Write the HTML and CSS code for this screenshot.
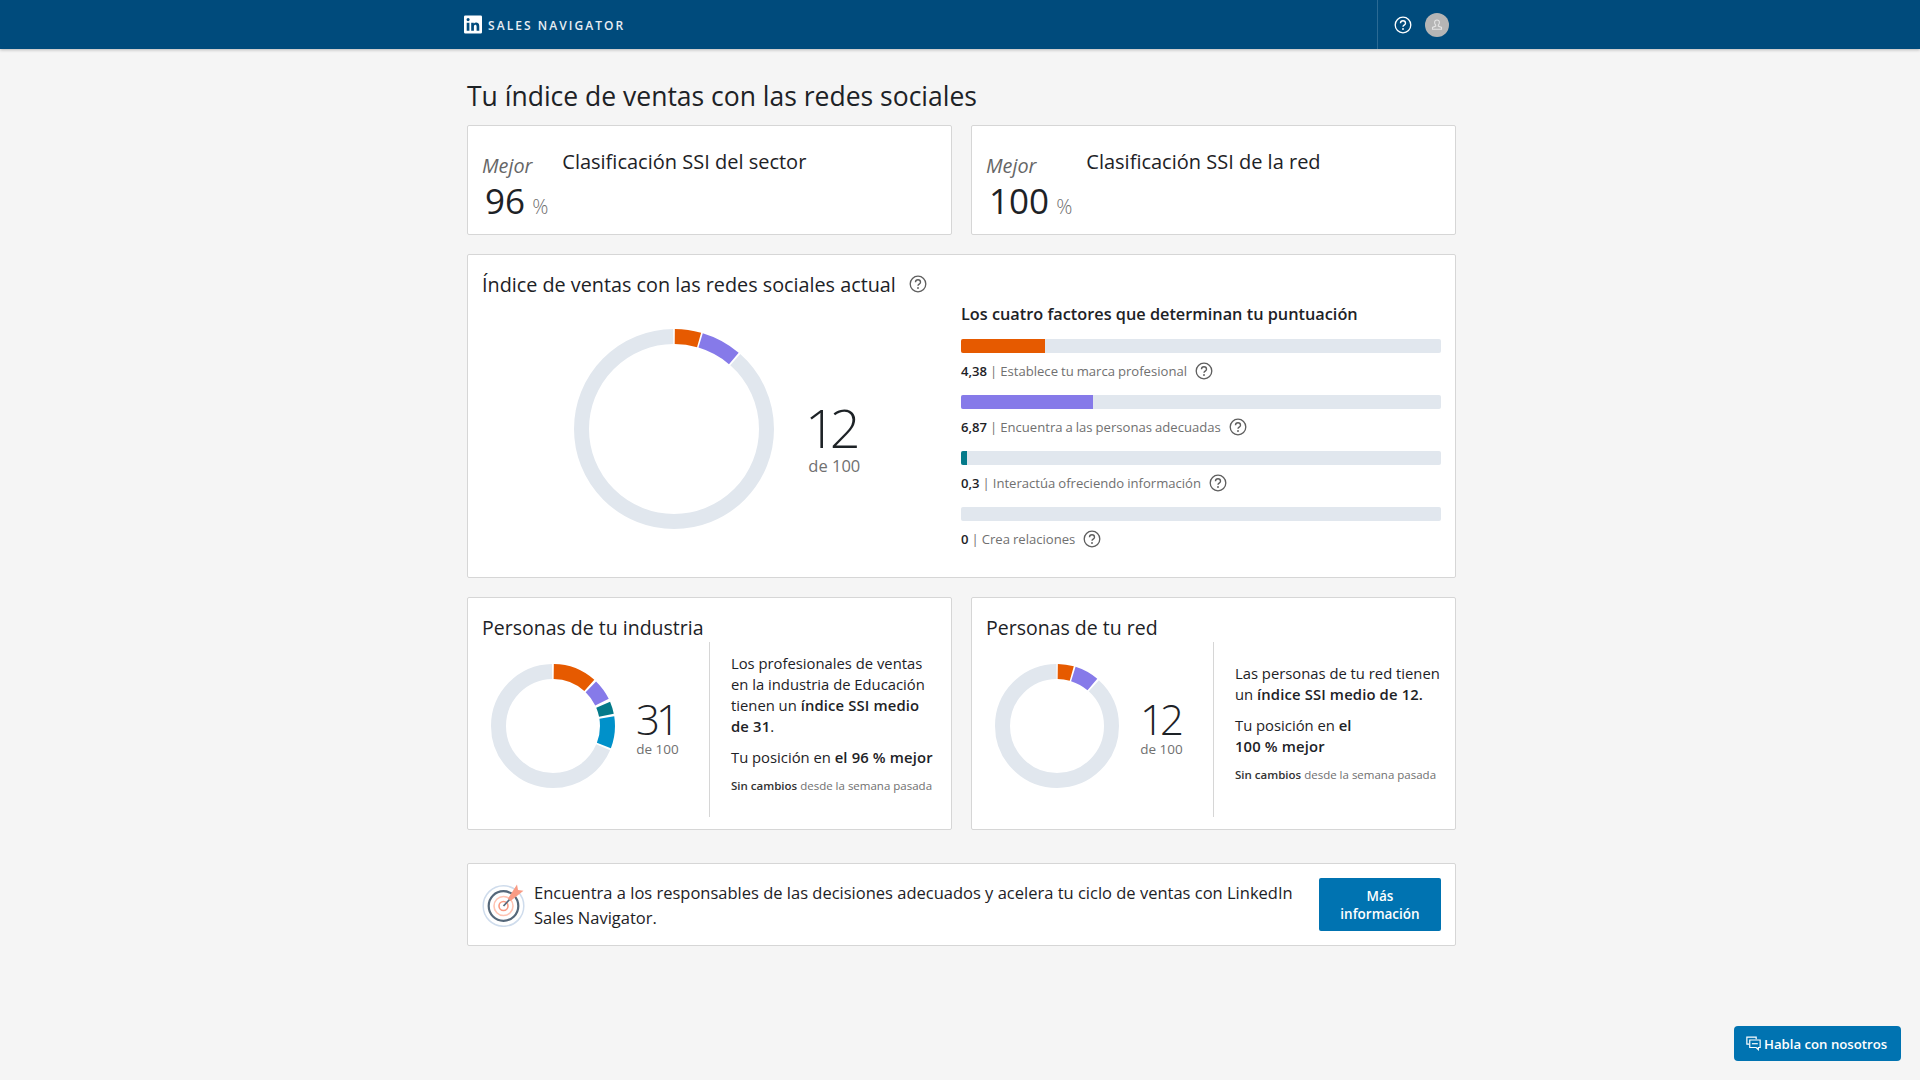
FILE: index.html
```html
<!DOCTYPE html>
<html lang="es">

<head>
    <meta charset="UTF-8">
    <title>Tu índice de ventas con las redes sociales</title>
    <link rel="stylesheet" href="styles.css">
</head>

<body>
    <svg class="defs">
        <symbol id="help" viewBox="0 0 18 18">
            <circle cx="9" cy="9" r="7.8" fill="none" stroke="currentColor" stroke-width="1.3"></circle>
            <path d="M6.5 7.2a2.5 2.5 0 0 1 5 0c0 1.9-2.5 1.9-2.5 3.6" fill="none" stroke="currentColor" stroke-width="1.4"></path>
            <circle cx="9" cy="13" r="0.95" fill="currentColor"></circle>
        </symbol>
    </svg>

    <header class="topbar">
        <div class="brand">
            <svg class="brand-logo" viewBox="2 2 20 20">
                <path fill="#fff" d="M20.5 2h-17A1.5 1.5 0 002 3.5v17A1.5 1.5 0 003.5 22h17a1.5 1.5 0 001.5-1.5v-17A1.5 1.5 0 0020.5 2zM8 19H5v-9h3zM6.5 8.25A1.75 1.75 0 118.3 6.5a1.78 1.78 0 01-1.8 1.75zM19 19h-3v-4.74c0-1.42-.6-1.93-1.38-1.93A1.74 1.74 0 0013 14.19a.66.66 0 000 .14V19h-3v-9h2.9v1.3a3.11 3.11 0 012.7-1.4c1.55 0 3.36.86 3.36 3.66z"></path>
            </svg>
            <span class="brand-name">SALES NAVIGATOR</span>
        </div>
        <div class="topbar-tools">
            <svg class="topbar-help"><use href="#help"></use></svg>
            <div class="avatar">
                <svg viewBox="0 0 24 24" width="24" height="24">
                    <path d="M12 7a2.4 2.4 0 0 1 2.4 2.5c0 1.2-.6 2.100-1.100 2.600v1l3.200 1.300v1.800h-9v-1.800l3.200-1.300v-1c-.5-.5-1.100-1.400-1.100-2.600A2.400 2.400 0 0 1 12 7z" fill="none" stroke="#e4e4e4" stroke-width="1.100"></path>
                </svg>
            </div>
        </div>
    </header>

    <main class="page">
        <h1 class="page-title">Tu índice de ventas con las redes sociales</h1>

        <div class="two-col">
            <section class="card rank-card">
                <div class="rank-score">
                    <div class="rank-label">Mejor</div>
                    <div class="rank-value">96 <span class="rank-pct">%</span></div>
                </div>
                <div class="rank-title">Clasificación SSI del sector</div>
            </section>
            <section class="card rank-card">
                <div class="rank-score">
                    <div class="rank-label">Mejor</div>
                    <div class="rank-value">100 <span class="rank-pct">%</span></div>
                </div>
                <div class="rank-title">Clasificación SSI de la red</div>
            </section>
        </div>

        <section class="card main-card">
            <div class="main-left">
                <h2 class="card-title">Índice de ventas con las redes sociales actual
                    <svg class="help-title"><use href="#help"></use></svg>
                </h2>
                <div class="main-chart">
                    <svg class="donut-big" viewBox="0 0 200 200">
                        <g transform="rotate(-90 100 100)" fill="none" stroke-width="15">
                            <circle cx="100" cy="100" r="92.500" pathLength="360" stroke="#e1e7ee" stroke-dasharray="318 42" stroke-dashoffset="-41.500"></circle>
                            <circle cx="100" cy="100" r="92.500" pathLength="360" stroke="#e65a00" stroke-dasharray="15.300 344.700" stroke-dashoffset="-0.500"></circle>
                            <circle cx="100" cy="100" r="92.500" pathLength="360" stroke="#867ae9" stroke-dasharray="23.500 336.500" stroke-dashoffset="-16.800"></circle>
                        </g>
                    </svg>
                    <div class="score score-big">
                        <div class="score-num">12</div>
                        <div class="score-of">de 100</div>
                    </div>
                </div>
            </div>
            <div class="main-right">
                <h3 class="factors-title">Los cuatro factores que determinan tu puntuación</h3>
                <div class="factor">
                    <div class="bar"><div class="bar-fill fill-orange" style="width: 84px"></div></div>
                    <div class="factor-text"><span><b>4,38</b> | Establece tu marca profesional</span><svg class="help-row"><use href="#help"></use></svg></div>
                </div>
                <div class="factor">
                    <div class="bar"><div class="bar-fill fill-purple" style="width: 132px"></div></div>
                    <div class="factor-text"><span><b>6,87</b> | Encuentra a las personas adecuadas</span><svg class="help-row"><use href="#help"></use></svg></div>
                </div>
                <div class="factor">
                    <div class="bar"><div class="bar-fill fill-teal" style="width: 6px"></div></div>
                    <div class="factor-text"><span><b>0,3</b> | Interactúa ofreciendo información</span><svg class="help-row"><use href="#help"></use></svg></div>
                </div>
                <div class="factor">
                    <div class="bar"></div>
                    <div class="factor-text"><span><b>0</b> | Crea relaciones</span><svg class="help-row"><use href="#help"></use></svg></div>
                </div>
            </div>
        </section>

        <div class="two-col">
            <section class="card people-card">
                <h2 class="card-title">Personas de tu industria</h2>
                <div class="people-body">
                    <div class="people-chart">
                        <svg class="donut-small" viewBox="0 0 124 124">
                            <g transform="rotate(-90 62 62)" fill="none" stroke-width="15">
                                <circle cx="62" cy="62" r="54.500" pathLength="360" stroke="#e1e7ee" stroke-dasharray="246 114" stroke-dashoffset="-113"></circle>
                                <circle cx="62" cy="62" r="54.500" pathLength="360" stroke="#e65a00" stroke-dasharray="41 319" stroke-dashoffset="-0.800"></circle>
                                <circle cx="62" cy="62" r="54.500" pathLength="360" stroke="#867ae9" stroke-dasharray="20 340" stroke-dashoffset="-44"></circle>
                                <circle cx="62" cy="62" r="54.500" pathLength="360" stroke="#047a8a" stroke-dasharray="11.500 348.500" stroke-dashoffset="-67"></circle>
                                <circle cx="62" cy="62" r="54.500" pathLength="360" stroke="#0091ca" stroke-dasharray="30 330" stroke-dashoffset="-81"></circle>
                            </g>
                        </svg>
                        <div class="score score-small">
                            <div class="score-num">31</div>
                            <div class="score-of">de 100</div>
                        </div>
                    </div>
                    <div class="people-text">
                        <p class="people-desc">Los profesionales de ventas en la industria de Educación tienen un <b>índice SSI medio de 31</b>.</p>
                        <p class="people-desc">Tu posición en <b>el 96 % mejor</b></p>
                        <p class="people-note"><b>Sin cambios</b> desde la semana pasada</p>
                    </div>
                </div>
            </section>
            <section class="card people-card">
                <h2 class="card-title">Personas de tu red</h2>
                <div class="people-body">
                    <div class="people-chart">
                        <svg class="donut-small" viewBox="0 0 124 124">
                            <g transform="rotate(-90 62 62)" fill="none" stroke-width="15">
                                <circle cx="62" cy="62" r="54.500" pathLength="360" stroke="#e1e7ee" stroke-dasharray="317 43" stroke-dashoffset="-42.500"></circle>
                                <circle cx="62" cy="62" r="54.500" pathLength="360" stroke="#e65a00" stroke-dasharray="15 345" stroke-dashoffset="-0.800"></circle>
                                <circle cx="62" cy="62" r="54.500" pathLength="360" stroke="#867ae9" stroke-dasharray="23 337" stroke-dashoffset="-17.500"></circle>
                            </g>
                        </svg>
                        <div class="score score-small">
                            <div class="score-num">12</div>
                            <div class="score-of">de 100</div>
                        </div>
                    </div>
                    <div class="people-text">
                        <p class="people-desc">Las personas de tu red tienen un <b>índice SSI medio de 12.</b></p>
                        <p class="people-desc">Tu posición en <b>el<br>100 % mejor</b></p>
                        <p class="people-note"><b>Sin cambios</b> desde la semana pasada</p>
                    </div>
                </div>
            </section>
        </div>

        <section class="card promo">
            <svg class="promo-icon" viewBox="0 0 44 44">
                <circle cx="21.500" cy="23" r="20.300" fill="#fff" stroke="#cfdcec" stroke-width="1.500"></circle>
                <circle cx="21.500" cy="23" r="14.800" fill="none" stroke="#56687a" stroke-width="2.200"></circle>
                <circle cx="21.500" cy="23" r="9.500" fill="none" stroke="#ffc4b3" stroke-width="1.600"></circle>
                <circle cx="21.500" cy="23" r="4.500" fill="none" stroke="#f99b84" stroke-width="1.600"></circle>
                <path d="M21.500 23L28 16" stroke="#56687a" stroke-width="1.800"></path>
                <path d="M26 15.500L35 1.500L36 7L41.500 7.800L28.500 18z" fill="#f99b84"></path>
            </svg>
            <p class="promo-text">Encuentra a los responsables de las decisiones adecuados y acelera tu ciclo de ventas con LinkedIn Sales Navigator.</p>
            <a class="promo-btn">Más información</a>
        </section>
    </main>

    <a class="chat-btn">
        <svg class="chat-icon" viewBox="0 0 14 14">
            <path d="M9.500 3V1H.8v6.500H3" fill="none" stroke="#fff" stroke-width="1.100"></path>
            <path d="M3.500 3.700h9.700v7H11.500v2l-2-2H3.500z" fill="none" stroke="#fff" stroke-width="1.100"></path>
            <path d="M5.500 7.200h5.500" stroke="#fff" stroke-width="1.100"></path>
        </svg>
        Habla con nosotros
    </a>
</body>

</html>
```

FILE: styles.css
```css
* {
    box-sizing: border-box;
}

body {
    margin: 0;
    min-height: 1080px;
    background: #f5f5f5;
    color: #1d2226;
    font-family: "Open Sans", "Noto Sans", sans-serif;
}

h1,
h2,
h3,
p {
    margin: 0;
    font-weight: 400;
}

b {
    font-weight: 600;
}

.defs {
    display: none;
}

.topbar {
    display: flex;
    justify-content: space-between;
    height: 49px;
    padding-left: 464px;
    padding-right: 471px;
    background: #004b7c;
    box-shadow: 0 1px 3px rgba(0, 0, 0, 0.25);
}

.brand {
    display: flex;
    align-items: center;
    gap: 6px;
    color: #e8eef3;
}

.brand-logo {
    width: 18px;
    height: 19px;
}

.brand-name {
    padding-top: 1px;
    font-size: 12px;
    font-weight: 600;
    letter-spacing: 2.050px;
}

.topbar-tools {
    display: flex;
    align-items: center;
    height: 49px;
    padding-left: 16px;
    border-left: 1px solid #2b6a94;
}

.topbar-help {
    width: 18px;
    height: 18px;
    color: #fff;
}

.avatar {
    width: 24px;
    height: 24px;
    margin-left: 13px;
    border-radius: 50%;
    background: #b5b5b5;
}

.page {
    width: 989px;
    margin-left: 467px;
}

.page-title {
    height: 76px;
    padding-top: 30px;
    font-size: 26.500px;
    line-height: 34px;
}

.two-col {
    display: grid;
    grid-template-columns: 485px 485px;
    gap: 19px;
}

.card {
    background: #fff;
    border: 1px solid #d6d6d6;
    border-radius: 2px;
}

.rank-card {
    display: flex;
    gap: 14px;
    height: 110px;
    padding: 17px 14px;
}

.rank-score {
    padding-top: 10px;
}

.rank-label {
    color: #666;
    font-size: 19.800px;
    font-style: italic;
    line-height: 26px;
}

.rank-value {
    padding-left: 3px;
    font-size: 35px;
    line-height: 44px;
    word-spacing: -2px;
    white-space: nowrap;
}

.rank-pct {
    color: #707070;
    font-size: 20px;
    font-weight: 300;
}

.rank-title {
    margin-top: 4px;
    font-size: 20px;
    line-height: 30px;
}

.main-card {
    display: flex;
    height: 324px;
    margin-top: 19px;
    margin-bottom: 19px;
    padding: 14px;
}

.main-left {
    width: 479px;
}

.card-title {
    font-size: 19.500px;
    line-height: 30px;
    white-space: nowrap;
}

.main-card .card-title {
    padding-top: 1px;
    font-size: 19.800px;
}

.help-title {
    width: 18px;
    height: 18px;
    margin-left: 8px;
    color: #5e5e5e;
    vertical-align: -1px;
}

.main-chart {
    display: flex;
    align-items: center;
    margin-top: 29px;
    padding-left: 92px;
}

.donut-big {
    width: 200px;
    height: 200px;
}

.score {
    text-align: center;
}

.score-num {
    font-weight: 300;
}

.score-of {
    color: #707070;
}

.score-big {
    margin-left: 31px;
    padding-top: 14px;
}

.score-big .score-num {
    padding-right: 9px;
    font-size: 54px;
    line-height: 60px;
    letter-spacing: -6px;
}

.score-big .score-of {
    font-size: 16.500px;
    line-height: 18px;
}

.main-right {
    width: 480px;
    padding-top: 34px;
}

.factors-title {
    margin-bottom: 14px;
    font-size: 16.300px;
    font-weight: 600;
    line-height: 22px;
}

.factor {
    height: 56px;
}

.bar {
    height: 14px;
    border-radius: 2px;
    background: #e1e7ee;
    overflow: hidden;
}

.bar-fill {
    height: 14px;
}

.fill-orange {
    background: #e65a00;
}

.fill-purple {
    background: #867ae9;
}

.fill-teal {
    background: #047a8a;
}

.factor-text {
    display: flex;
    align-items: center;
    height: 36px;
    color: #707070;
    font-size: 13.100px;
    word-spacing: -0.400px;
    white-space: pre;
}

.factor-text b {
    color: #1d2226;
}

.help-row {
    width: 18px;
    height: 18px;
    margin-left: 8px;
    color: #5e5e5e;
}

.people-card {
    height: 233px;
    padding: 15px 14px 14px;
}

.people-body {
    display: flex;
    height: 175px;
    margin-top: -1px;
}

.people-chart {
    display: flex;
    align-items: center;
    width: 227px;
    padding-left: 9px;
    padding-bottom: 8px;
}

.donut-small {
    width: 124px;
    height: 124px;
}

.score-small {
    margin-left: 21px;
    padding-top: 2px;
}

.score-small .score-num {
    padding-right: 3px;
    font-size: 42px;
    line-height: 44px;
    letter-spacing: -4px;
}

.score-small .score-of {
    font-size: 13.500px;
    line-height: 16px;
}

.people-text {
    display: flex;
    flex-direction: column;
    justify-content: center;
    flex: 1;
    margin-right: -14px;
    padding: 0 10px 12px 21px;
    border-left: 1px solid #d6d6d6;
}

.people-desc {
    margin-bottom: 10px;
    font-size: 14.800px;
    line-height: 21px;
}

.people-desc b {
    letter-spacing: 0.150px;
}

.people-note {
    margin-top: -1px;
    color: #707070;
    font-size: 11.500px;
    line-height: 18px;
    white-space: nowrap;
}

.people-note b {
    color: #333;
}

.promo {
    display: flex;
    align-items: center;
    height: 83px;
    margin-top: 33px;
    padding-left: 14px;
    padding-right: 14px;
}

.promo-icon {
    flex: none;
    width: 44px;
    height: 44px;
}

.promo-text {
    flex: 1;
    margin-left: 8px;
    padding-right: 20px;
    font-size: 16.500px;
    line-height: 25px;
}

.promo-btn {
    flex: none;
    width: 122px;
    padding: 8.500px 16px;
    border-radius: 2px;
    background: #0073b1;
    color: #fff;
    font-size: 13.500px;
    font-weight: 600;
    line-height: 18px;
    text-align: center;
}

.chat-btn {
    position: fixed;
    right: 19px;
    bottom: 19px;
    display: flex;
    align-items: center;
    gap: 3px;
    width: 167px;
    height: 35px;
    padding-left: 12px;
    border-radius: 4px;
    background: #0073b1;
    color: #fff;
    font-size: 13.200px;
    font-weight: 600;
    white-space: nowrap;
}

.chat-icon {
    width: 15px;
    height: 15px;
}
```
